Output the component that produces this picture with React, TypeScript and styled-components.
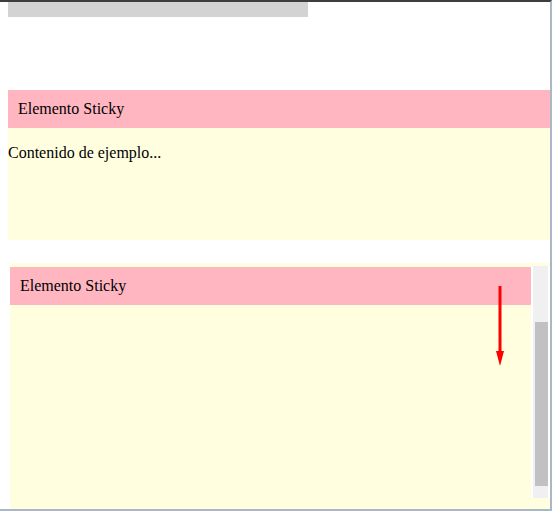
import React from "react";
import styled, { createGlobalStyle } from "styled-components";

const Global = createGlobalStyle`
  html, body { margin: 0; padding: 0; background: #ffffff; }
  body { font-family: "Liberation Serif", "Times New Roman", serif; font-size: 16px; color: #000; }
`;

const Frame = styled.div`
  position: relative;
  box-sizing: border-box;
  width: 552px;
  height: 511px;
  border-top: 2px solid #3d3d3d;
  border-right: 2px solid #aab7c9;
  border-bottom: 2px solid #aab7c9;
  padding-left: 8px;
  overflow: hidden;
`;

const TopBar = styled.div`
  width: 300px;
  height: 15px;
  background: #d3d3d3;
`;

const Section = styled.section<{ $top: number; $indent?: number }>`
  margin-top: ${(p) => p.$top}px;
  margin-left: ${(p) => p.$indent ?? 0}px;
`;

const StickyHeader = styled.div`
  background: #ffb6c1;
  padding: 10px;
  line-height: 18px;
  height: 18px;
`;

const Body = styled.div<{ $h: number }>`
  background: #ffffe0;
  height: ${(p) => p.$h}px;
  overflow: hidden;
`;

const Para = styled.p`
  margin: 16px 0 0;
  line-height: 18px;
`;

const ScrollBox = styled.div`
  position: relative;
  background: #ffffe0;
  height: 246px;
  display: flex;
  padding-top: 4px;
  box-sizing: border-box;
`;

const ScrollContent = styled.div`
  flex: 1;
`;

const ScrollBar = styled.div`
  margin-top: -1px;
  width: 15px;
  height: 232px;
  border-left: 2px solid #ffffff;
  border-right: 2px solid #ffffff;
  background: #f0f0f0;
  position: relative;
`;

const Thumb = styled.div`
  position: absolute;
  top: 56px;
  left: 2px;
  right: 0;
  height: 164px;
  background: #c1c1c1;
`;

const Arrow = styled.svg`
  position: absolute;
  left: 484px;
  top: 19px;
`;

export default function App() {
  return (
    <>
      <Global />
      <Frame>
        <TopBar />
        <Section $top={73}>
          <StickyHeader>Elemento Sticky</StickyHeader>
          <Body $h={112}>
            <Para>Contenido de ejemplo...</Para>
          </Body>
        </Section>
        <Section $top={23} $indent={2}>
          <ScrollBox>
            <ScrollContent>
              <StickyHeader>Elemento Sticky</StickyHeader>
            </ScrollContent>
            <ScrollBar>
              <Thumb />
            </ScrollBar>
            <Arrow width="20" height="90" viewBox="0 0 20 90">
              <line x1="6" y1="4" x2="6" y2="72" stroke="#ff0000" strokeWidth="3" />
              <polygon points="2,69 10,69 6,84" fill="#ff0000" />
            </Arrow>
          </ScrollBox>
        </Section>
      </Frame>
    </>
  );
}
